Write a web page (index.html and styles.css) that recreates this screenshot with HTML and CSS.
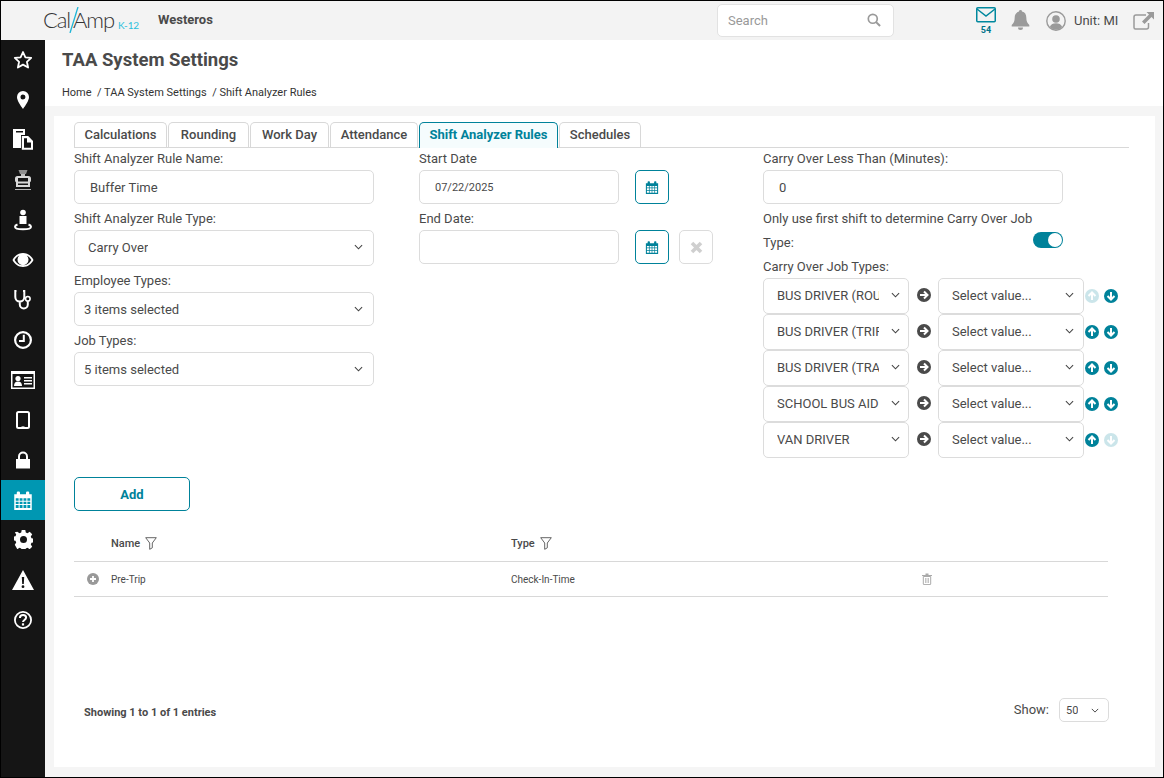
FILE: index.html
```html
<!DOCTYPE html>
<html lang="en">
<head>
<meta charset="utf-8">
<title>TAA System Settings</title>
<link rel="stylesheet" href="styles.css">
</head>
<body>
<svg class="defs" width="0" height="0" aria-hidden="true">
  <symbol id="chev" viewBox="0 0 10 6"><path d="M1 1l4 4 4-4" fill="none" stroke="#444" stroke-width="1.200"/></symbol>
  <symbol id="cal" viewBox="0 0 16 16"><path fill="currentColor" fill-rule="evenodd" d="M1 3h2V1.800a1 1 0 0 1 1-1h.6a1 1 0 0 1 1 1V3h4.800V1.800a1 1 0 0 1 1-1H12a1 1 0 0 1 1 1V3h2v12.500H1zM2.200 6.200v1.900h2.300V6.200zm3.100 0v1.900h2.300V6.200zm3.100 0v1.900h2.300V6.200zm3.100 0v1.900h2.300V6.200zM2.200 8.900v1.900h2.300V8.900zm3.100 0v1.900h2.300V8.900zm3.100 0v1.900h2.300V8.900zm3.100 0v1.900h2.300V8.900zM2.200 11.600v2.300h2.300v-2.300zm3.100 0v2.300h2.300v-2.300zm3.100 0v2.300h2.300v-2.300zm3.100 0v2.300h2.300v-2.300z"/></symbol>
  <symbol id="right" viewBox="0 0 14 14"><circle cx="7" cy="7" r="7" fill="#4a4a4a"/><path d="M3 7h7M7 3.500L10.500 7 7 10.500" fill="none" stroke="#fff" stroke-width="2"/></symbol>
  <symbol id="up" viewBox="0 0 14 14"><circle cx="7" cy="7" r="7" fill="currentColor"/><path d="M7 11V4M3.500 7L7 3.500 10.500 7" fill="none" stroke="#fff" stroke-width="2"/></symbol>
  <symbol id="down" viewBox="0 0 14 14"><circle cx="7" cy="7" r="7" fill="currentColor"/><path d="M7 3v7M3.500 7L7 10.500 10.500 7" fill="none" stroke="#fff" stroke-width="2"/></symbol>
  <symbol id="funnel" viewBox="0 0 12 13"><path d="M.7.700h10.600L7.300 6v4.800L4.700 12.300V6z" fill="none" stroke="#555" stroke-width=".9"/></symbol>
</svg>

<div class="app">
  <header class="topbar">
    <div class="brand">
      <span class="logo">Cal<svg class="slash" width="10" height="26" viewBox="0 0 10 26"><path d="M9 0L1 26" stroke="#20b5d6" stroke-width="1.300"/></svg>Amp</span>
      <span class="logo-sub">K-12</span>
    </div>
    <span class="unit-name">Westeros</span>
    <div class="search">
      <input class="search-input" type="text" placeholder="Search">
      <svg width="14" height="14" viewBox="0 0 15 15"><circle cx="6.200" cy="6.200" r="4.800" fill="none" stroke="#9a9a9a" stroke-width="1.800"/><path d="M9.800 9.800l4.200 4.200" stroke="#9a9a9a" stroke-width="2.200"/></svg>
    </div>
    <div class="mail">
      <svg width="20" height="16" viewBox="0 0 20 16"><rect x=".75" y=".75" width="18.500" height="14" rx="1" fill="none" stroke="#00889e" stroke-width="1.500"/><path d="M1 2l9 7 9-7" fill="none" stroke="#00889e" stroke-width="1.500"/></svg>
      <span class="mail-count">54</span>
    </div>
    <svg class="bell" width="19" height="21" viewBox="0 0 19 21"><path fill="#9a9a9a" d="M9.500 0a1.500 1.500 0 0 1 1.500 1.600c3 .6 4.300 3 4.300 6 0 4 1 5.700 3 7.400v1.500H.7V15c2-1.700 3-3.400 3-7.400 0-3 1.300-5.400 4.300-6A1.500 1.500 0 0 1 9.500 0zM7 17.500h5a2.500 2.500 0 0 1-5 0z"/></svg>
    <svg class="user" width="20" height="20" viewBox="0 0 20 20"><circle cx="10" cy="10" r="9.200" fill="none" stroke="#9a9a9a" stroke-width="1.400"/><circle cx="10" cy="8" r="3.800" fill="#9a9a9a"/><path fill="#9a9a9a" d="M3.800 16c1-2.800 3.400-3.800 6.200-3.800s5.200 1 6.200 3.800a8.500 8.500 0 0 1-12.400 0z"/></svg>
    <span class="unit-label">Unit: MI</span>
    <svg class="popout" width="21" height="18" viewBox="0 0 21 18"><path d="M13 3H3a2 2 0 0 0-2 2v10.500a1.500 1.500 0 0 0 1.500 1.500h11a2 2 0 0 0 2-2v-4" fill="none" stroke="#9a9a9a" stroke-width="1.500"/><path fill="#9a9a9a" d="M13.500 0H21v7.500l-2.500-2.500-7 7-2.500-2.500 7-7z"/></svg>
  </header>

  <div class="body-row">
    <nav class="sidebar">
      <a class="nav-item"><svg width="20" height="20" viewBox="0 0 20 20"><path d="M10 2l2.400 5.300 5.800.6-4.300 3.900 1.200 5.700L10 14.600l-5.100 2.900 1.200-5.700L1.800 7.900l5.800-.6z" fill="none" stroke="#fff" stroke-width="1.800" stroke-linejoin="round"/></svg></a>
      <a class="nav-item"><svg width="20" height="20" viewBox="0 0 20 20"><path fill="#fff" fill-rule="evenodd" d="M10 1a6 6 0 0 1 6 6c0 3.500-3.500 8.500-6 12-2.500-3.500-6-8.500-6-12a6 6 0 0 1 6-6zm0 3.500a2.500 2.500 0 1 0 0 5 2.500 2.500 0 0 0 0-5z"/></svg></a>
      <a class="nav-item"><svg width="22" height="22" viewBox="0 0 22 22"><path fill="#fff" d="M1 0h12v6H9v13H1z"/><path fill="#151515" d="M4 2h7v1.500H4z"/><path d="M9.800 7h6.400l4.800 5v8.800H9.800z" fill="#fff"/><path d="M12 9.200h3v4.300h4v5.300h-7z" fill="#151515"/></svg></a>
      <a class="nav-item"><svg width="20" height="22" viewBox="0 0 20 22"><path fill="#8e8e8e" d="M5.500 1h9l-1.500 4H7z"/><path fill="#bdbdbd" d="M8 5h4v2H8z"/><path fill="#d8d8d8" d="M4.500 7h11a2.500 2.500 0 0 1 2.500 2.500v2a2 2 0 0 1-1 1.700V18H3v-4.800a2 2 0 0 1-1-1.700v-2A2.500 2.500 0 0 1 4.500 7z"/><path fill="#151515" d="M5 9h10v3.500H5zM5 14.500h10V16H5z"/><path fill="#b5b5b5" d="M2 20h16v1H2z"/></svg></a>
      <a class="nav-item"><svg width="20" height="22" viewBox="0 0 20 22"><circle cx="10" cy="3.500" r="2.800" fill="#fff"/><path fill="#fff" d="M6.500 7h7v8h-7z"/><path fill="none" stroke="#fff" stroke-width="2" d="M4.500 15.500C2.500 16.200 2 17 2 17.800c0 1.500 3.500 2.500 8 2.500s8-1 8-2.500c0-.8-.5-1.600-2.500-2.300"/></svg></a>
      <a class="nav-item"><svg width="22" height="16" viewBox="0 0 22 16"><path fill="#fff" fill-rule="evenodd" d="M11 1c4.500 0 8.500 2.800 10.500 7-2 4.200-6 7-10.500 7S2.500 12.200.5 8C2.500 3.800 6.500 1 11 1zM2.600 8c1.900 3.300 4.900 5.300 8.400 5.300s6.500-2 8.400-5.300c-1.200-2-2.800-3.500-4.700-4.400A5.500 5.500 0 1 1 7.300 3.600C5.400 4.500 3.800 6 2.600 8z"/><path fill="#fff" d="M9 3.500a2 2 0 0 0-2 2.500l1.200-.3a1 1 0 0 1 1-1.100z"/></svg></a>
      <a class="nav-item"><svg width="18" height="20" viewBox="0 0 18 20"><path d="M2.500 1H1.300v6a4.500 4.500 0 0 0 9 0V1H9M5.800 11.500v3a4 4 0 0 0 8 0v-3" fill="none" stroke="#fff" stroke-width="2"/><circle cx="13.800" cy="8.800" r="2.300" fill="none" stroke="#fff" stroke-width="1.600"/></svg></a>
      <a class="nav-item"><svg width="18" height="18" viewBox="0 0 18 18"><circle cx="9" cy="9" r="7.900" fill="none" stroke="#fff" stroke-width="2.200"/><path d="M9.800 3.800v6.200H5" fill="none" stroke="#fff" stroke-width="2"/></svg></a>
      <a class="nav-item"><svg width="24" height="18" viewBox="0 0 24 18"><path fill="#fff" fill-rule="evenodd" d="M0 0h24v18H0zm1.500 3v13.500h21V3z"/><circle cx="7" cy="7.500" r="2.600" fill="#fff"/><path fill="#fff" d="M3 15c0-3.200 1.600-4.500 4-4.500s4 1.300 4 4.500z"/><path fill="#fff" d="M13 6h8v1.400h-8zM13 9h8v1.400h-8zM13 12h8v1.400h-8z"/></svg></a>
      <a class="nav-item"><svg width="14" height="18" viewBox="0 0 14 18"><rect x="1" y="1" width="12" height="16" rx="1.500" fill="none" stroke="#fff" stroke-width="2"/><path fill="#fff" d="M5.500 15.400h3v1h-3z"/></svg></a>
      <a class="nav-item"><svg width="14" height="18" viewBox="0 0 14 18"><path fill="#fff" d="M0 8h14v9.500H0z"/><path d="M3 8.500V5.500a4 4 0 0 1 8 0v3" fill="none" stroke="#fff" stroke-width="2"/></svg></a>
      <a class="nav-item is-active"><svg class="nav-cal" width="20" height="21" viewBox="0 0 16 16"><use href="#cal"/></svg></a>
      <a class="nav-item nav-up"><svg width="19" height="19" viewBox="0 0 19 19"><path fill="#fff" fill-rule="evenodd" d="M7.700 0h3.600l.5 2.500 1.700.7 2.200-1.400 2.500 2.500-1.400 2.200.7 1.700 2.500.5v3.600l-2.500.5-.7 1.700 1.400 2.200-2.500 2.500-2.200-1.400-1.700.7-.5 2.500H7.700l-.5-2.500-1.700-.7-2.200 1.400L.8 14.700l1.400-2.200-.7-1.700L-1 10.300V6.700l2.500-.5.7-1.700L.8 2.300 3.300 1.800l2.200 1.400 1.700-.7zM9.500 6a3.500 3.500 0 1 0 0 7 3.500 3.500 0 0 0 0-7z"/></svg></a>
      <a class="nav-item"><svg width="22" height="20" viewBox="0 0 22 20"><path fill="#fff" fill-rule="evenodd" d="M11 0l11 20H0zM9.800 7l.4 7h1.600l.4-7zm1.200 8.300a1.400 1.400 0 1 0 0 2.800 1.400 1.400 0 0 0 0-2.800z"/></svg></a>
      <a class="nav-item"><svg width="18" height="18" viewBox="0 0 18 18"><circle cx="9" cy="9" r="8.100" fill="none" stroke="#fff" stroke-width="1.800"/><path d="M5.900 7c0-2 1.400-3 3.200-3 1.700 0 3 1 3 2.600 0 2.400-3.100 2.400-3.100 4.500" fill="none" stroke="#fff" stroke-width="2"/><path fill="#fff" d="M7.900 12.300h2.200v2.200H7.900z"/></svg></a>
    </nav>

    <main class="main">
      <div class="page-head">
        <h1 class="page-title">TAA System Settings</h1>
        <div class="crumbs">Home&nbsp; / TAA System Settings&nbsp; / Shift Analyzer Rules</div>
      </div>
      <div class="page-body">
        <section class="card">
          <div class="tabs">
            <a class="tab tab-calc">Calculations</a>
            <a class="tab tab-round">Rounding</a>
            <a class="tab tab-work">Work Day</a>
            <a class="tab tab-att">Attendance</a>
            <a class="tab tab-shift is-active">Shift Analyzer Rules</a>
            <a class="tab tab-sched">Schedules</a>
          </div>

          <div class="form-grid">
            <div class="col">
              <label class="lbl">Shift Analyzer Rule Name:</label>
              <input class="field field-wide field-name" type="text" value="Buffer Time">
              <label class="lbl lbl-next">Shift Analyzer Rule Type:</label>
              <div class="select select-wide select-tall select-type"><span class="sel-text">Carry Over</span><svg class="chev" width="9" height="6"><use href="#chev"/></svg></div>
              <label class="lbl lbl-next">Employee Types:</label>
              <div class="select select-wide"><span class="sel-text">3 items selected</span><svg class="chev" width="9" height="6"><use href="#chev"/></svg></div>
              <label class="lbl lbl-next">Job Types:</label>
              <div class="select select-wide"><span class="sel-text">5 items selected</span><svg class="chev" width="9" height="6"><use href="#chev"/></svg></div>
            </div>

            <div class="col">
              <label class="lbl">Start Date</label>
              <div class="date-row">
                <input class="field field-date" type="text" value="07/22/2025">
                <button class="icon-btn"><svg width="14" height="15"><use href="#cal"/></svg></button>
              </div>
              <label class="lbl lbl-next">End Date:</label>
              <div class="date-row">
                <input class="field field-date" type="text">
                <button class="icon-btn"><svg width="14" height="15"><use href="#cal"/></svg></button>
                <button class="icon-btn icon-btn-off"><svg width="13" height="13" viewBox="0 0 13 13"><path d="M2 2l9 9M11 2l-9 9" stroke="#cfcfcf" stroke-width="3.600"/></svg></button>
              </div>
            </div>

            <div class="col">
              <label class="lbl">Carry Over Less Than (Minutes):</label>
              <input class="field field-wide field-carry" type="text" value="0">
              <div class="long-label">
                <div class="long-line">Only use first shift to determine Carry Over Job</div>
                <div class="toggle-row"><span>Type:</span><span class="toggle"><span class="knob"></span></span></div>
              </div>
              <label class="lbl lbl-carry">Carry Over Job Types:</label>
              <div class="map-row">
                <div class="select select-job"><span class="sel-text">BUS DRIVER (ROUTE)</span><svg class="chev" width="9" height="6"><use href="#chev"/></svg></div>
                <svg class="go" width="14" height="14"><use href="#right"/></svg>
                <div class="select select-val"><span class="sel-text">Select value...</span><svg class="chev" width="9" height="6"><use href="#chev"/></svg></div>
                <svg class="mv mv-off" width="14" height="14"><use href="#up"/></svg>
                <svg class="mv" width="14" height="14"><use href="#down"/></svg>
              </div>
              <div class="map-row">
                <div class="select select-job"><span class="sel-text">BUS DRIVER (TRIP)</span><svg class="chev" width="9" height="6"><use href="#chev"/></svg></div>
                <svg class="go" width="14" height="14"><use href="#right"/></svg>
                <div class="select select-val"><span class="sel-text">Select value...</span><svg class="chev" width="9" height="6"><use href="#chev"/></svg></div>
                <svg class="mv" width="14" height="14"><use href="#up"/></svg>
                <svg class="mv" width="14" height="14"><use href="#down"/></svg>
              </div>
              <div class="map-row">
                <div class="select select-job"><span class="sel-text">BUS DRIVER (TRAINING)</span><svg class="chev" width="9" height="6"><use href="#chev"/></svg></div>
                <svg class="go" width="14" height="14"><use href="#right"/></svg>
                <div class="select select-val"><span class="sel-text">Select value...</span><svg class="chev" width="9" height="6"><use href="#chev"/></svg></div>
                <svg class="mv" width="14" height="14"><use href="#up"/></svg>
                <svg class="mv" width="14" height="14"><use href="#down"/></svg>
              </div>
              <div class="map-row">
                <div class="select select-job"><span class="sel-text">SCHOOL BUS AIDE</span><svg class="chev" width="9" height="6"><use href="#chev"/></svg></div>
                <svg class="go" width="14" height="14"><use href="#right"/></svg>
                <div class="select select-val"><span class="sel-text">Select value...</span><svg class="chev" width="9" height="6"><use href="#chev"/></svg></div>
                <svg class="mv" width="14" height="14"><use href="#up"/></svg>
                <svg class="mv" width="14" height="14"><use href="#down"/></svg>
              </div>
              <div class="map-row">
                <div class="select select-job"><span class="sel-text">VAN DRIVER</span><svg class="chev" width="9" height="6"><use href="#chev"/></svg></div>
                <svg class="go" width="14" height="14"><use href="#right"/></svg>
                <div class="select select-val"><span class="sel-text">Select value...</span><svg class="chev" width="9" height="6"><use href="#chev"/></svg></div>
                <svg class="mv" width="14" height="14"><use href="#up"/></svg>
                <svg class="mv mv-off" width="14" height="14"><use href="#down"/></svg>
              </div>
            </div>
          </div>

          <button class="add-btn">Add</button>

          <div class="rule-table">
            <div class="t-row t-head">
              <span class="t-name">Name <svg class="funnel" width="12" height="13"><use href="#funnel"/></svg></span>
              <span class="t-type">Type <svg class="funnel" width="12" height="13"><use href="#funnel"/></svg></span>
            </div>
            <div class="t-row t-body">
              <svg class="expand" width="12" height="12" viewBox="0 0 12 12"><circle cx="6" cy="6" r="6" fill="#999"/><path d="M6 3v6M3 6h6" stroke="#fff" stroke-width="1.800"/></svg>
              <span class="t-name">Pre-Trip</span>
              <span class="t-type">Check-In-Time</span>
              <svg class="trash" width="10" height="12" viewBox="0 0 10 12"><path d="M0 2h10v1H0zM3.500.500h3V2h-3z" fill="#aaa"/><path d="M1.300 3.500h7.400V11a.6.600 0 0 1-.6.600H1.900a.6.600 0 0 1-.6-.6z" fill="none" stroke="#aaa"/><path d="M3.500 5v5M5 5v5M6.500 5v5" stroke="#aaa" stroke-width=".7"/></svg>
            </div>
          </div>

          <div class="t-foot">
            <span class="showing">Showing 1 to 1 of 1 entries</span>
            <div class="show-box">
              <span class="show-label">Show:</span>
              <div class="select select-page"><span class="sel-text">50</span><svg class="chev" width="8" height="5"><use href="#chev"/></svg></div>
            </div>
          </div>
        </section>
      </div>
    </main>
  </div>
</div>
</body>
</html>
```
FILE: styles.css
```css
* { box-sizing: border-box; }
html, body { margin: 0; height: 100%; }
body { font-family: Roboto, "Liberation Sans", sans-serif; color: #4a4a4a; background: #fff; overflow: hidden; }
.defs { position: absolute; }

.app { width: 1164px; height: 778px; border: 1px solid #000; display: flex; flex-direction: column; background: #f5f5f5; }

/* top bar */
.topbar { height: 39px; flex: none; background: #f3f3f3; display: flex; align-items: center; }
.brand { margin-left: 42px; width: 115px; display: flex; align-items: flex-end; height: 26px; margin-top: -2px; }
.logo { font-family: Lato, sans-serif; font-weight: 300; font-size: 22px; line-height: 26px; color: #333; letter-spacing: -1.100px; display: flex; align-items: center; }
.slash { margin: 0 -6px 0 -1px; }
.logo-sub { font-family: Lato, sans-serif; font-weight: 400; font-size: 10px; letter-spacing: -.2px; color: #2cbfdd; margin-left: 4px; margin-bottom: 2px; line-height: 12px; }
.unit-name { font-size: 13px; font-weight: 700; color: #4a4a4a; width: 559px; margin-top: -2px; }
.search { width: 177px; height: 33px; background: #fff; border: 1px solid #e2e2e2; border-radius: 5px; display: flex; align-items: center; padding: 0 12px 0 10px; margin-top: -1px; }
.search-input { flex: 1; min-width: 0; border: 0; outline: 0; padding: 0; background: none; font: 13px Roboto, sans-serif; color: #777; }
.search-input::placeholder { color: #999; opacity: 1; }
.mail { margin-left: 82px; width: 20px; height: 30px; display: flex; flex-direction: column; align-items: center; margin-top: 3px; }
.mail-count { font-size: 9px; line-height: 10px; font-weight: 700; color: #00738a; margin-top: 2px; }
.bell { margin-left: 15px; }
.user { margin-left: 16px; }
.unit-label { font-size: 13px; color: #4a4a4a; margin-left: 8px; width: 58px; }
.popout { margin-left: 1px; }

/* layout */
.body-row { flex: 1; min-height: 0; display: flex; }
.sidebar { width: 44px; flex: none; background: #151515; display: flex; flex-direction: column; }
.nav-item { height: 40px; flex: none; display: flex; align-items: center; justify-content: center; }
.nav-item.is-active { background: #0097b2; }
.nav-up svg { margin-top: -2px; }
.nav-cal { color: #fff; }
.main { flex: 1; min-width: 0; display: flex; flex-direction: column; }
.page-head { height: 66px; flex: none; background: #fff; padding: 8px 17px 0; }
.page-title { margin: 0; font-size: 18.500px; line-height: 24px; font-weight: 700; color: #4a4a4a; }
.crumbs { margin-top: 14px; font-size: 11px; line-height: 14px; font-weight: 400; color: #333; }
.page-body { flex: 1; min-height: 0; padding: 10px 8px 10px 9px; }
.card { background: #fff; height: 100%; padding: 6px 26px 0 20px; }

/* tabs */
.tabs { display: flex; gap: 1px; height: 26px; border-bottom: 1px solid #d8d8d8; }
.tab { height: 25px; border: 1px solid #d8d8d8; border-bottom: 0; border-radius: 5px 5px 0 0; font-size: 13px; line-height: 24px; font-weight: 500; color: #4a4a4a; text-align: center; background: #fff; }
.tab-calc { width: 93px; }
.tab-round { width: 81px; }
.tab-work { width: 79px; }
.tab-att { width: 88px; }
.tab-shift { width: 139px; }
.tab-sched { width: 82px; }
.tab.is-active { color: #00829a; border-color: #00829a; background: #f5fcfd; font-weight: 700; height: 26px; position: relative; }

/* form */
.form-grid { display: grid; grid-template-columns: 345px 344px 1fr; margin-top: 1px; height: 328px; }
.col { display: flex; flex-direction: column; align-items: flex-start; }
.lbl { font-size: 13px; line-height: 19px; height: 17px; margin-bottom: 4px; color: #4a4a4a; display: block; }
.lbl-next { margin-top: 5px; margin-bottom: 3px; height: 18px; line-height: 20px; }
.field { height: 34px; border: 1px solid #dcdcdc; border-radius: 5px; background: #fff; font: 13px Roboto, sans-serif; color: #4a4a4a; outline: 0; }
.field-wide { width: 300px; }
.field-name { padding: 0 15px; }
.field-carry { padding: 0 15px; }
.field-date { width: 200px; padding: 0 15px; font-size: 11px; }
.date-row { display: flex; gap: 10px; align-items: flex-start; }
.date-row .field-date { margin-right: 6px; }
.icon-btn { width: 34px; height: 34px; border: 1px solid #00829a; border-radius: 5px; background: #fff; color: #00829a; padding: 0; display: flex; align-items: center; justify-content: center; }
.icon-btn-off { border-color: #dcdcdc; }

.select { display: flex; align-items: center; justify-content: space-between; height: 34px; border: 1px solid #dcdcdc; border-radius: 5px; background: #fff; font-size: 13px; color: #4a4a4a; }
.sel-text { white-space: nowrap; overflow: hidden; }
.chev { flex: none; }
.select-wide { width: 300px; padding: 0 10px 0 9px; }
.select-tall { height: 36px; padding-bottom: 2px; }
.select-type { padding-left: 13px; }

.long-label { font-size: 13px; width: 300px; margin-top: 5px; }
.long-line { line-height: 20px; height: 18px; }
.toggle-row { display: flex; justify-content: space-between; align-items: center; height: 18px; margin-top: 6px; }
.toggle { width: 30px; height: 16px; border-radius: 8px; background: #00829a; position: relative; display: block; margin-top: -4px; }
.knob { position: absolute; right: 1px; top: 1px; width: 14px; height: 14px; border-radius: 50%; background: #fff; }
.lbl-carry { margin-top: 6px; margin-bottom: 3px; height: 18px; line-height: 20px; }

.map-row { display: flex; align-items: center; height: 36px; color: #00829a; }
.select-job { width: 146px; height: 36px; padding: 0 8px 2px 13px; flex: none; }
.select-job .sel-text { width: 102px; }
.select-val { width: 146px; height: 36px; padding: 0 9px 2px 13px; flex: none; }
.go { margin: -2px 7px 0 8px; flex: none; }
.mv { margin-left: 1px; margin-right: 4px; flex: none; }
.mv-off { opacity: .2; }

/* add */
.add-btn { display: block; width: 116px; height: 34px; border: 1px solid #00829a; border-radius: 5px; background: #fff; color: #00829a; font: 700 13px Roboto, sans-serif; }

/* table */
.rule-table { width: 1034px; margin-top: 15px; }
.t-row { display: flex; align-items: center; position: relative; border-bottom: 1px solid #d8d8d8; }
.t-head { height: 36px; font-size: 11px; font-weight: 500; color: #4a4a4a; }
.t-body { height: 35px; font-size: 10px; color: #4a4a4a; }
.t-name { position: absolute; left: 37px; display: flex; align-items: center; gap: 5px; }
.t-type { position: absolute; left: 437px; display: flex; align-items: center; gap: 5px; }
.expand { margin-left: 13px; }
.trash { position: absolute; left: 848px; }

.t-foot { display: flex; align-items: center; justify-content: space-between; width: 1035px; margin-top: 101px; padding-left: 10px; }
.showing { font-size: 11px; font-weight: 700; color: #4a4a4a; padding-top: 4px; }
.show-box { display: flex; align-items: center; gap: 10px; font-size: 13px; }
.show-label { margin-bottom: 2px; }
.select-page { width: 50px; height: 24px; font-size: 11px; padding: 0 9px 0 6px; }
```
